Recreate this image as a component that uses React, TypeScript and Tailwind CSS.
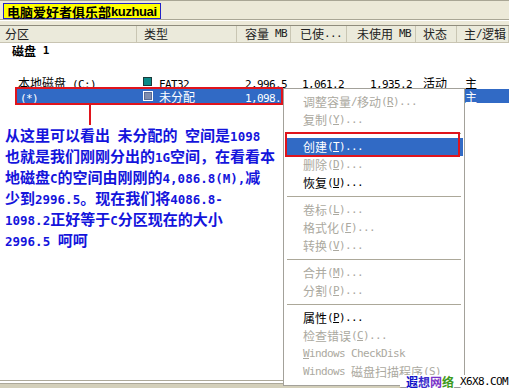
import React from "react";

const CJK_RE = /([\u2E80-\u9FFF\u3000-\u303F\uFF00-\uFFEF]+)/;

function Mix({ text, cjk, lat }: { text: string; cjk: string; lat: string }) {
  const parts = text.split(CJK_RE).filter((p) => p.length > 0);
  return (
    <>
      {parts.map((p, i) =>
        CJK_RE.test(p) ? (
          <span key={i} className={cjk}>
            {p}
          </span>
        ) : (
          <span key={i} className={lat + " whitespace-pre"}>
            {p}
          </span>
        )
      )}
    </>
  );
}

const TC = "font-['Noto_Sans_CJK_SC',sans-serif] text-[12px]";
const TL = "font-['DejaVu_Sans_Mono',monospace] text-[11px] tracking-[-0.62px]";

function T({ text }: { text: string }) {
  return <Mix text={text} cjk={TC} lat={TL} />;
}

function HeaderCell({ w, pl, text }: { w: string; pl: string; text: string }) {
  return (
    <div className={`${w} ${pl} h-full flex items-center border-r border-[#c9c6b3] text-[#222] whitespace-nowrap overflow-hidden`}>
      <T text={text} />
    </div>
  );
}

function TealIcon() {
  return <div className="w-[9px] h-[9px] bg-[#0a8a88] border border-[#1b3a3a] shrink-0" />;
}

function UnallocIcon() {
  return (
    <div className="w-[10px] h-[10px] bg-white p-[1px] shrink-0">
      <div className="w-full h-full bg-[#7e8db0] border border-[#5b6c96]" />
    </div>
  );
}

function K({ k }: { k: string }) {
  return (
    <span className={TL}>
      (<u>{k}</u>)...
    </span>
  );
}

type MItem = { label: React.ReactNode; s: "dis" | "en" | "hi" } | "sep";

const items: MItem[] = [
  { label: <>调整容量<span className={TL}>/</span>移动<K k="R" /></>, s: "dis" },
  { label: <>复制<K k="Y" /></>, s: "dis" },
  "sep",
  { label: <>创建<K k="T" /></>, s: "hi" },
  { label: <>删除<K k="D" /></>, s: "dis" },
  { label: <>恢复<K k="U" /></>, s: "en" },
  "sep",
  { label: <>卷标<K k="L" /></>, s: "dis" },
  { label: <>格式化<K k="F" /></>, s: "dis" },
  { label: <>转换<K k="V" /></>, s: "dis" },
  "sep",
  { label: <>合并<K k="M" /></>, s: "dis" },
  { label: <>分割<K k="P" /></>, s: "dis" },
  "sep",
  { label: <>属性<K k="P" /></>, s: "en" },
  { label: <>检查错误<K k="C" /></>, s: "dis" },
  { label: <span className={TL + " whitespace-pre"}><u>W</u>indows CheckDisk</span>, s: "dis" },
  {
    label: (
      <>
        <span className={TL + " whitespace-pre"}>Windows </span>磁盘扫描程序
        <span className={TL}>
          (<u>S</u>)
        </span>
      </>
    ),
    s: "dis",
  },
];

const AC = "font-['Noto_Sans_CJK_SC',sans-serif] text-[15px]";
const AL = "font-['DejaVu_Sans_Mono',monospace] text-[12.5px]";

const notes = [
  "从这里可以看出 未分配的 空间是1098",
  "也就是我们刚刚分出的1G空间，在看看本",
  "地磁盘C的空间由刚刚的4,086.8(M),减",
  "少到2996.5。现在我们将4086.8-",
  "1098.2正好等于C分区现在的大小",
  "2996.5 呵呵",
];

const WM = "font-['Noto_Sans_CJK_SC',sans-serif] text-[12px] leading-[13px] font-bold";

export default function App() {
  return (
    <div className="relative w-[509px] h-[388px] overflow-hidden bg-white flex flex-col text-black">
      {/* title bar */}
      <div className="h-[20px] flex items-start bg-[#ece9d8] border-t border-b border-[#a9a695] pl-[3px] pt-[2px] shrink-0">
        <div className="flex h-[16px] items-center bg-[#ffff00] border border-[#2323c8] pl-[3px] pr-[3px] font-bold text-[13px] leading-none font-['Noto_Sans_CJK_SC',sans-serif] whitespace-nowrap">
          电脑爱好者俱乐部<span className="font-['Liberation_Sans',sans-serif] tracking-[-0.4px]">kuzhuai</span>
        </div>
      </div>
      <div className="h-[5px] bg-[#ece9d8] border-t border-white shrink-0" />

      {/* header */}
      <div className="h-[18px] flex bg-[#ebeadb] border-t border-b border-t-[#8f8c7d] border-b-[#c8c4b2] shrink-0">
        <HeaderCell w="w-[137px]" pl="pl-[5px]" text="分区" />
        <HeaderCell w="w-[100px]" pl="pl-[7px]" text="类型" />
        <HeaderCell w="w-[54px]" pl="pl-[8px]" text="容量 MB" />
        <HeaderCell w="w-[56px]" pl="pl-[9px]" text="已使..." />
        <HeaderCell w="w-[69px]" pl="pl-[10px]" text="未使用 MB" />
        <HeaderCell w="w-[41px]" pl="pl-[7px]" text="状态" />
        <HeaderCell w="w-[52px]" pl="pl-[7px]" text="主/逻辑" />
      </div>

      {/* list body */}
      <div className="flex-1 flex flex-col bg-white">
        <div className="h-[16px] flex items-center pl-[12px] font-bold whitespace-nowrap">
          <span className={TC}>磁盘</span>
          <span className="font-['DejaVu_Sans_Mono',monospace] text-[11px] whitespace-pre"> 1</span>
        </div>
        <div className="h-[15px]" />
        {/* row 1 */}
        <div className="h-[15px] flex items-center whitespace-nowrap">
          <div className="w-[137px] pl-[18px]"><T text="本地磁盘 (C:)" /></div>
          <div className="w-[100px] pl-[6px] flex items-center">
            <TealIcon />
            <span className="ml-[7px]"><T text="FAT32" /></span>
          </div>
          <div className="w-[54px] pr-[4px] text-right"><T text="2,996.5" /></div>
          <div className="w-[56px] pr-[3px] text-right"><T text="1,061.2" /></div>
          <div className="w-[69px] pr-[4px] text-right"><T text="1,935.2" /></div>
          <div className="w-[41px] pl-[7px]"><T text="活动" /></div>
          <div className="w-[52px] pl-[8px]"><T text="主" /></div>
        </div>
        {/* selected row */}
        <div className="h-[14px] ml-[15px] flex items-center bg-[#316ac5] text-white whitespace-nowrap">
          <div className="w-[122px] pl-[5px]"><T text="(*)" /></div>
          <div className="w-[100px] pl-[6px] flex items-center">
            <UnallocIcon />
            <span className="ml-[6px]"><T text="未分配" /></span>
          </div>
          <div className="w-[54px] pr-[4px] text-right"><T text="1,098.2" /></div>
          <div className="w-[56px]" />
          <div className="w-[69px]" />
          <div className="w-[41px]" />
          <div className="w-[52px] pl-[8px]"><T text="主" /></div>
        </div>

        {/* annotation */}
        <div className="mt-[21px] pl-[5px] leading-[21px] font-bold text-[#1414dc] whitespace-nowrap">
          {notes.map((n, i) => (
            <div key={i} className="h-[21px]">
              <Mix text={n} cjk={AC} lat={AL} />
            </div>
          ))}
        </div>
      </div>

      {/* bottom band */}
      <div className="h-[8px] flex flex-col border-t border-[#aca899] shrink-0">
        <div className="h-[2px] bg-white" />
        <div className="h-px bg-[#aca899]" />
        <div className="flex-1 bg-[#d3cfba]" />
      </div>

      {/* red annotation marks */}
      <div className="absolute left-[15px] top-[87px] w-[268px] h-[18px] border-2 border-[#e0141c]" />
      <div className="absolute left-[89px] top-[105px] w-[2px] h-[20px] bg-[#e0141c]" />

      {/* context menu */}
      <div className="absolute left-[283px] top-[88px] w-[182px] h-[298px] bg-white border border-[#a3a19a] pt-[4px] flex flex-col">
        {items.map((it, i) =>
          it === "sep" ? (
            <div key={i} className="h-[9px] flex items-center">
              <div className="h-px flex-1 mx-[3px] bg-[#aca899]" />
            </div>
          ) : (
            <div
              key={i}
              className={`h-[18px] mx-[1px] pl-[18px] flex items-center whitespace-nowrap ${TC} ${
                it.s === "hi" ? "bg-[#316ac5] text-white" : it.s === "en" ? "text-black" : "text-[#aba9a0]"
              }`}
            >
              {it.label}
            </div>
          )
        )}
      </div>

      <div className="absolute left-[285px] top-[132px] w-[175px] h-[25px] border-2 border-[#e0141c]" />

      {/* watermark */}
      <div className="absolute left-[400px] top-[375px] w-[109px] bg-white flex items-center whitespace-nowrap leading-[13px]">
        <span className={TL}>_</span>
        <span className={`${WM} text-[#1010c8]`}>遐</span>
        <span className={`${WM} text-[#3a2ccc]`}>想</span>
        <span className={`${WM} text-[#7a33c8]`}>网</span>
        <span className={`${WM} text-[#3c9a1c]`}>络</span>
        <span className={TL}>_X6X8.COM</span>
      </div>
    </div>
  );
}
